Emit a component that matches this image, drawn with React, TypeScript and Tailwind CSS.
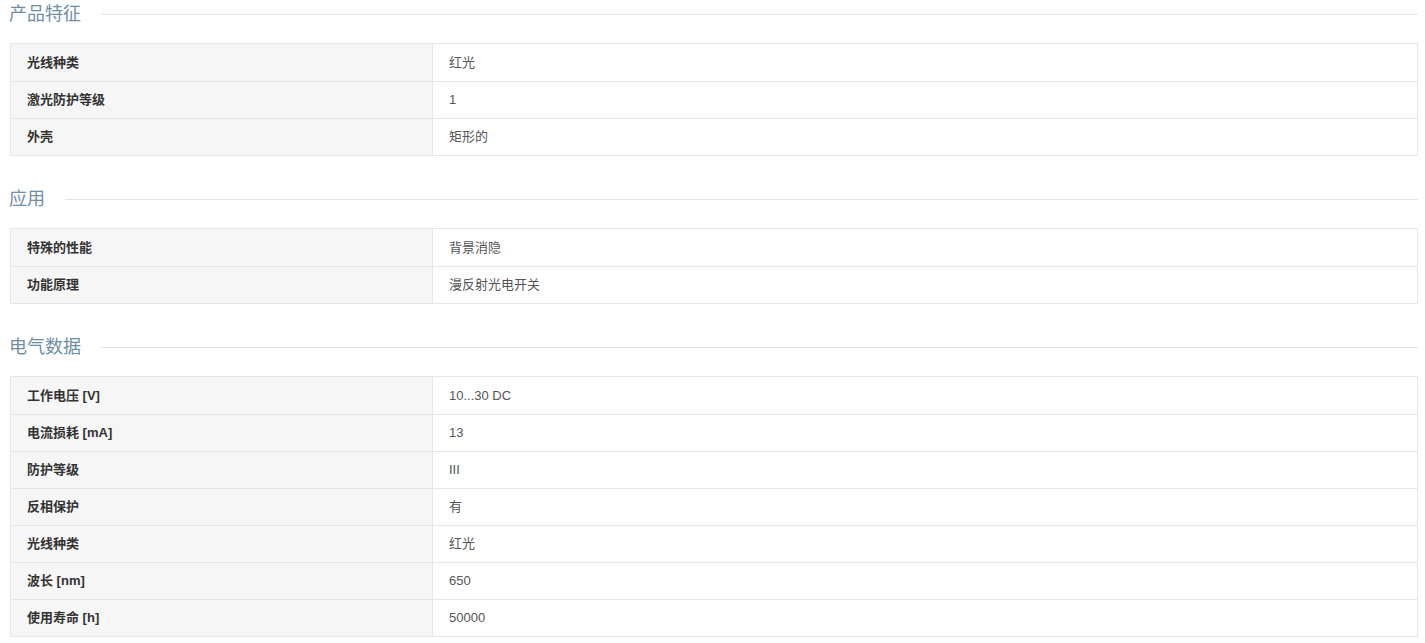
import React from "react";

const sections: { title: string; rows: [string, string][] }[] = [
  {
    title: "产品特征",
    rows: [
      ["光线种类", "红光"],
      ["激光防护等级", "1"],
      ["外壳", "矩形的"],
    ],
  },
  {
    title: "应用",
    rows: [
      ["特殊的性能", "背景消隐"],
      ["功能原理", "漫反射光电开关"],
    ],
  },
  {
    title: "电气数据",
    rows: [
      ["工作电压 [V]", "10...30 DC"],
      ["电流损耗 [mA]", "13"],
      ["防护等级", "III"],
      ["反相保护", "有"],
      ["光线种类", "红光"],
      ["波长 [nm]", "650"],
      ["使用寿命 [h]", "50000"],
    ],
  },
];

export default function App() {
  return (
    <div
      className="bg-white pl-[10px] pr-[7px] text-[13px]"
      style={{ fontFamily: '"Liberation Sans", Arial, "Noto Sans CJK SC", sans-serif' }}
    >
      {sections.map((s, i) => (
        <div key={s.title} className={i === 0 ? "" : "mt-[29px]"}>
          <div className="flex items-center h-[28px] mb-[15px]">
            <h3 className="text-[18px] leading-[28px] text-[#6f8ea6] -ml-[1px] font-normal">
              {s.title}
            </h3>
            <div className="flex-1 h-px bg-[#e3e3e3] ml-[20px]" />
          </div>
          <div className="border border-[#e6e6e6]">
            {s.rows.map(([k, v], j) => (
              <div
                key={k + j}
                className={`flex h-[37px] ${j > 0 ? "border-t border-[#e6e6e6]" : ""}`}
              >
                <div className="w-[422px] shrink-0 bg-[#f6f6f6] border-r border-[#e6e6e6] flex items-center pl-[16px] font-bold text-[#333]">
                  {k}
                </div>
                <div className="flex-1 flex items-center pl-[16px] text-[#555]">{v}</div>
              </div>
            ))}
          </div>
        </div>
      ))}
    </div>
  );
}
